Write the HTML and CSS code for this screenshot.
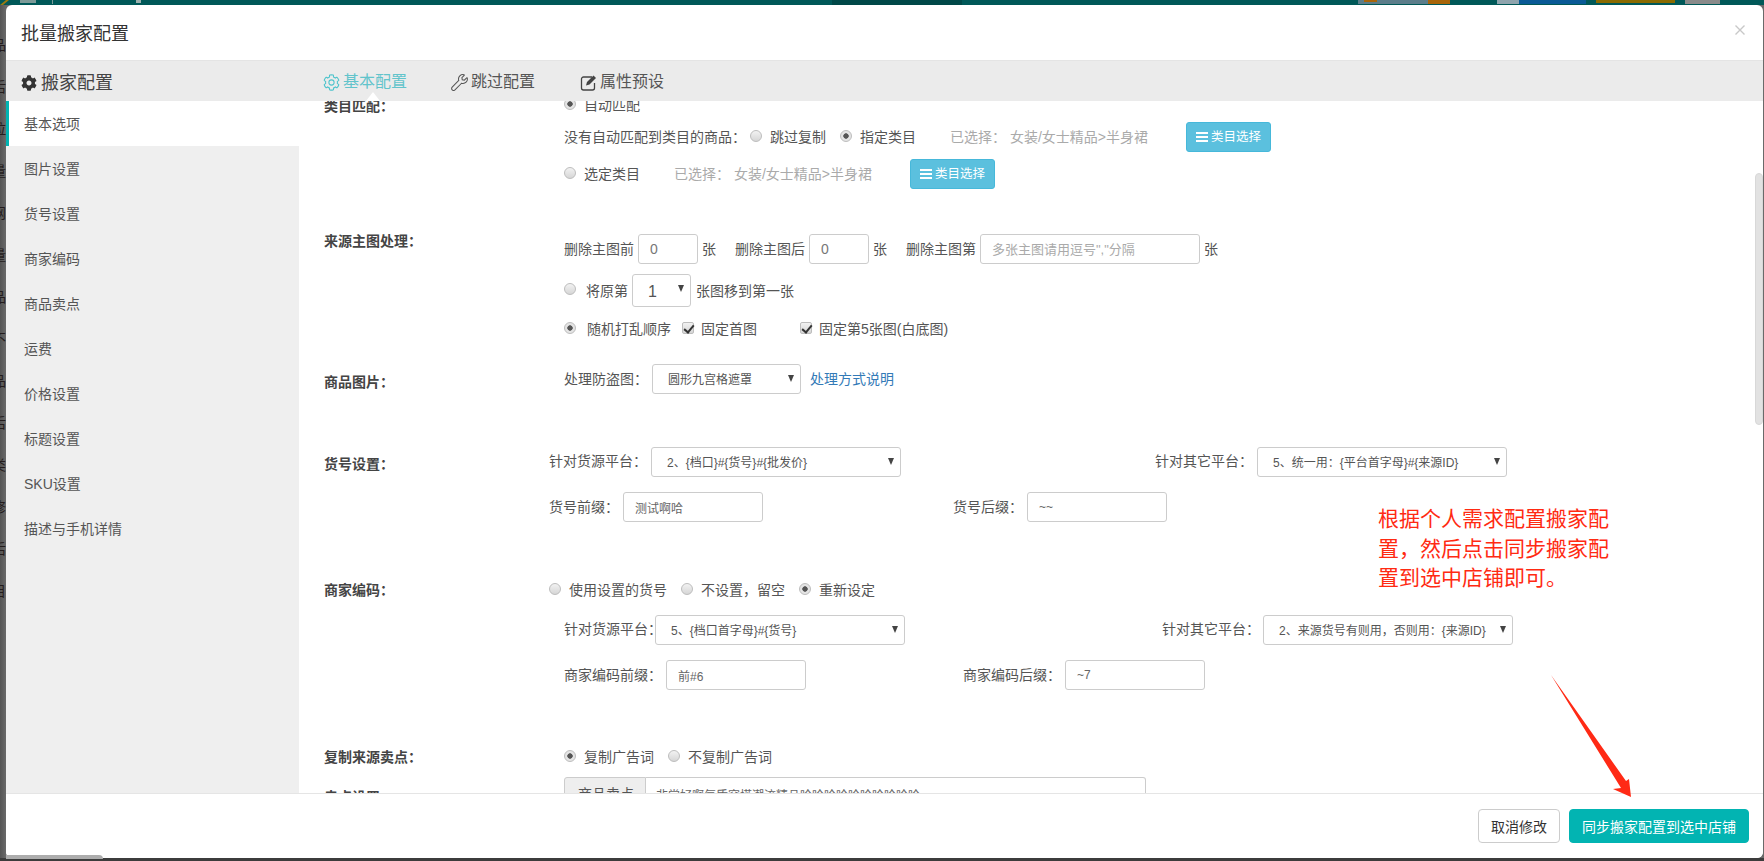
FILE: index.html
```html
<!DOCTYPE html>
<html lang="zh-CN">
<head>
<meta charset="utf-8">
<title>批量搬家配置</title>
<link rel="stylesheet" href="styles.css">
</head>
<body>
<div class="backdrop">
  <svg class="top-strip" width="1764" height="5" viewBox="0 0 1764 5" aria-hidden="true">
    <rect x="832" y="0" width="130" height="5" fill="#004848"/>
    <polygon points="0,5 6,0 9,0 3,5" fill="#9a7a10"/>
    <rect x="20" y="0" width="16" height="3" fill="#7d9a98"/>
    <rect x="52" y="0" width="1" height="4" fill="#7d9a98"/>
    <rect x="136" y="0" width="5" height="3" fill="#9db0ae"/>
    <rect x="1358" y="0" width="70" height="4" fill="#5c7d8a"/>
    <rect x="1364" y="0" width="13" height="2" fill="#a8650a"/>
    <rect x="1428" y="0" width="22" height="4" fill="#a8650a"/>
    <rect x="1497" y="0" width="22" height="4" fill="#8fa4ad"/>
    <rect x="1519" y="0" width="67" height="4" fill="#0a5a96"/>
    <rect x="1596" y="0" width="79" height="3" fill="#8a6a00"/>
    <rect x="1685" y="0" width="35" height="4" fill="#8a8a8a"/>
  </svg>
  <div class="left-strip" aria-hidden="true">
    <span>品</span><span>后</span><span>拉</span><span>量</span><span>网</span><span>量</span><span>品</span><span>不</span><span>品</span><span>后</span><span>类</span><span>修</span><span>后</span><span>目</span>
  </div>
</div>

<div class="modal">
  <header class="modal-head">
    <h1 class="modal-title">批量搬家配置</h1>
    <svg class="close" width="10" height="10" viewBox="0 0 10 10" aria-hidden="true"><path d="M0.5 0.5L9.5 9.5M9.5 0.5L0.5 9.5"/></svg>
  </header>

  <div class="band">
    <div class="band-left">
      <svg class="ic-solid" width="16" height="16" viewBox="0 0 512 512" aria-hidden="true"><path d="M487.4 315.7l-42.6-24.6c4.3-23.2 4.3-47 0-70.2l42.6-24.6c4.9-2.8 7.1-8.6 5.5-14-11.1-35.6-30-67.8-54.7-94.6-3.8-4.1-10-5.1-14.8-2.3L380.8 110c-17.9-15.4-38.5-27.3-60.8-35.1V25.8c0-5.6-3.9-10.5-9.4-11.7-36.7-8.2-74.3-7.8-109.2 0-5.5 1.2-9.4 6.1-9.4 11.7V75c-22.2 7.9-42.8 19.8-60.8 35.1L88.7 85.5c-4.9-2.8-11-1.9-14.8 2.3-24.7 26.7-43.6 58.9-54.7 94.6-1.7 5.4.6 11.2 5.5 14L67.3 221c-4.3 23.2-4.3 47 0 70.2l-42.6 24.6c-4.9 2.8-7.1 8.6-5.5 14 11.1 35.6 30 67.8 54.7 94.6 3.8 4.1 10 5.1 14.8 2.3l42.6-24.6c17.9 15.4 38.5 27.3 60.8 35.1v49.2c0 5.6 3.9 10.5 9.4 11.7 36.7 8.2 74.3 7.8 109.2 0 5.5-1.2 9.4-6.1 9.4-11.7v-49.2c22.2-7.9 42.8-19.8 60.8-35.1l42.6 24.6c4.9 2.8 11 1.9 14.8-2.3 24.7-26.7 43.6-58.9 54.7-94.6 1.5-5.5-.7-11.3-5.6-14.1zM256 336c-44.1 0-80-35.9-80-80s35.9-80 80-80 80 35.9 80 80-35.9 80-80 80z"/></svg>
      <span class="band-title">搬家配置</span>
    </div>
    <nav class="tabs">
      <a class="tab active">
        <svg class="ic-line" width="17" height="17" viewBox="-20 -20 552 552" aria-hidden="true"><path d="M487.4 315.7l-42.6-24.6c4.3-23.2 4.3-47 0-70.2l42.6-24.6c4.9-2.8 7.1-8.6 5.5-14-11.1-35.6-30-67.8-54.7-94.6-3.8-4.1-10-5.1-14.8-2.3L380.8 110c-17.9-15.4-38.5-27.3-60.8-35.1V25.8c0-5.6-3.9-10.5-9.4-11.7-36.7-8.2-74.3-7.8-109.2 0-5.5 1.2-9.4 6.1-9.4 11.7V75c-22.2 7.9-42.8 19.8-60.8 35.1L88.7 85.5c-4.9-2.8-11-1.9-14.8 2.3-24.7 26.7-43.6 58.9-54.7 94.6-1.7 5.4.6 11.2 5.5 14L67.3 221c-4.3 23.2-4.3 47 0 70.2l-42.6 24.6c-4.9 2.8-7.1 8.6-5.5 14 11.1 35.6 30 67.8 54.7 94.6 3.8 4.1 10 5.1 14.8 2.3l42.6-24.6c17.9 15.4 38.5 27.3 60.8 35.1v49.2c0 5.6 3.9 10.5 9.4 11.7 36.7 8.2 74.3 7.8 109.2 0 5.5-1.2 9.4-6.1 9.4-11.7v-49.2c22.2-7.9 42.8-19.8 60.8-35.1l42.6 24.6c4.9 2.8 11 1.9 14.8-2.3 24.7-26.7 43.6-58.9 54.7-94.6 1.5-5.5-.7-11.3-5.6-14.1z"/><circle cx="256" cy="256" r="85"/></svg>
        基本配置
      </a>
      <a class="tab">
        <svg class="ic-line" width="17" height="17" viewBox="-20 -20 552 552" aria-hidden="true"><path d="M507.73 109.1c-2.24-9.03-13.54-12.09-20.12-5.51l-74.36 74.36-67.88-11.31-11.31-67.88 74.36-74.36c6.62-6.62 3.43-17.9-5.66-20.16-47.38-11.74-99.55.91-136.58 37.93-39.64 39.64-50.55 97.1-34.05 147.2L18.74 402.76c-24.99 24.99-24.99 65.51 0 90.5 24.99 24.99 65.51 24.99 90.5 0l213.21-213.21c50.12 16.71 107.47 5.68 147.37-34.22 37.07-37.07 49.7-89.32 37.91-136.73z"/></svg>
        跳过配置
      </a>
      <a class="tab">
        <svg class="ic-edit" width="17" height="17" viewBox="0 0 17 17" aria-hidden="true"><path class="box" d="M12 3H3.500A2 2 0 0 0 1.500 5V14A2 2 0 0 0 3.500 16H12.500A2 2 0 0 0 14.500 14V9"/><path class="pen" d="M6 11.500L7 8L13.500 1.500L16 4L9.500 10.500Z"/></svg>
        属性预设
      </a>
    </nav>
  </div>

  <div class="modal-body">
    <aside class="side">
      <a class="side-item active">基本选项</a>
      <a class="side-item">图片设置</a>
      <a class="side-item">货号设置</a>
      <a class="side-item">商家编码</a>
      <a class="side-item">商品卖点</a>
      <a class="side-item">运费</a>
      <a class="side-item">价格设置</a>
      <a class="side-item">标题设置</a>
      <a class="side-item">SKU设置</a>
      <a class="side-item">描述与手机详情</a>
    </aside>

    <main class="content">
      <section class="sec s-a">
        <div class="lbl d1">类目匹配：</div>
        <div class="vals">
          <div class="line ind">
            <input class="radio" type="radio" name="r1" checked><span class="t8">自动匹配</span>
          </div>
          <div class="line ind mt2">
            <span class="cn">没有自动匹配到类目的商品：</span>
            <input class="radio m11" type="radio" name="r2"><span class="t8">跳过复制</span>
            <input class="radio m14" type="radio" name="r2" checked><span class="t8">指定类目</span>
            <span class="muted m34">已选择： 女装/女士精品&gt;半身裙</span>
            <button class="btn-info m38" type="button"><span class="bars"></span>类目选择</button>
          </div>
          <div class="line ind mt7">
            <input class="radio" type="radio" name="r1"><span class="t8">选定类目</span>
            <span class="muted m34">已选择： 女装/女士精品&gt;半身裙</span>
            <button class="btn-info m38" type="button"><span class="bars"></span>类目选择</button>
          </div>
        </div>
      </section>

      <section class="sec s-d">
        <div class="lbl up8">来源主图处理：</div>
        <div class="vals">
          <div class="line ind">
            <span>删除主图前</span><input class="field w60 m4 big" value="0"><span class="m4">张</span>
            <span class="m19">删除主图后</span><input class="field w60 m4 big" value="0"><span class="m4">张</span>
            <span class="m19">删除主图第</span><input class="field w220 m4" placeholder="多张主图请用逗号&quot;,&quot;分隔"><span class="m4">张</span>
          </div>
          <div class="line h33 ind mt10">
            <input class="radio" type="radio" name="r3"><span class="t10">将原第</span>
            <span class="sel w59 m4 h33"><select class="num"><option>1</option></select></span>
            <span class="m5">张图移到第一张</span>
          </div>
          <div class="line ind mt7">
            <input class="radio" type="radio" name="r3" checked><span class="t11">随机打乱顺序</span>
            <input class="check m11" type="checkbox" checked><span class="t7">固定首图</span>
            <input class="check m43" type="checkbox" checked><span class="t7">固定第5张图(白底图)</span>
          </div>
        </div>
      </section>

      <section class="sec s-g">
        <div class="lbl d3">商品图片：</div>
        <div class="vals">
          <div class="line ind">
            <span class="cn">处理防盗图：</span>
            <span class="sel w149 m11"><select><option>圆形九宫格遮罩</option></select></span>
            <a class="link m9">处理方式说明</a>
          </div>
        </div>
      </section>

      <section class="sec s-h">
        <div class="lbl d2">货号设置：</div>
        <div class="vals">
          <div class="line">
            <span class="cn up">针对货源平台：</span>
            <span class="sel w250 m11"><select><option>2、{档口}#{货号}#{批发价}</option></select></span>
            <span class="cn up m254">针对其它平台：</span>
            <span class="sel w250 m11"><select><option>5、统一用：{平台首字母}#{来源ID}</option></select></span>
          </div>
          <div class="line mt15">
            <span class="cn">货号前缀：</span>
            <input class="field w140 m11" value="测试啊哈">
            <span class="cn m190">货号后缀：</span>
            <input class="field w140 m11" value="~~">
          </div>
        </div>
      </section>

      <section class="sec s-j">
        <div class="lbl">商家编码：</div>
        <div class="vals">
          <div class="line">
            <input class="radio" type="radio" name="r4"><span class="t8">使用设置的货号</span>
            <input class="radio m14" type="radio" name="r4"><span class="t8">不设置，留空</span>
            <input class="radio m14" type="radio" name="r4" checked><span class="t8">重新设定</span>
          </div>
          <div class="line ind mt10">
            <span class="cn up">针对货源平台：</span>
            <span class="sel w250"><select><option>5、{档口首字母}#{货号}</option></select></span>
            <span class="cn up m257">针对其它平台：</span>
            <span class="sel w250 m10"><select><option>2、来源货号有则用，否则用：{来源ID}</option></select></span>
          </div>
          <div class="line ind mt15">
            <span class="cn">商家编码前缀：</span>
            <input class="field w140 m11" value="前#6">
            <span class="cn m157">商家编码后缀：</span>
            <input class="field w140 m11" value="~7">
          </div>
        </div>
      </section>

      <section class="sec s-m">
        <div class="lbl">复制来源卖点：</div>
        <div class="vals">
          <div class="line ind">
            <input class="radio" type="radio" name="r5" checked><span class="t8">复制广告词</span>
            <input class="radio m14" type="radio" name="r5"><span class="t8">不复制广告词</span>
          </div>
        </div>
      </section>

      <section class="sec s-n">
        <div class="lbl d5">卖点设置：</div>
        <div class="vals">
          <div class="line h34 ind">
            <span class="addon">商品卖点</span><input class="field group" value="非常好啊气质穿搭潮流精品哈哈哈哈哈哈哈哈哈哈">
          </div>
        </div>
      </section>
      <div class="scroll-thumb"></div>
    </main>
  </div>

  <footer class="modal-foot">
    <button class="btn-cancel" type="button">取消修改</button>
    <button class="btn-primary" type="button">同步搬家配置到选中店铺</button>
  </footer>
</div>

<div class="note">根据个人需求配置搬家配置，然后点击同步搬家配置到选中店铺即可。</div>
<svg class="pointer" width="1764" height="861" viewBox="0 0 1764 861" aria-hidden="true"><polygon points="1551,675 1621,788 1613,789 1631,797 1629,779 1626,781"/></svg>
<div class="corner-bit"></div>
</body>
</html>
```

FILE: styles.css
```css
* { box-sizing: border-box; }
html, body { margin: 0; height: 100%; }
body {
  width: 1764px;
  height: 861px;
  overflow: hidden;
  background: #3c3c3c;
  font-family: "Liberation Sans", "Noto Sans CJK SC", sans-serif;
  font-size: 14px;
  color: #555;
  position: relative;
}

/* page behind the dialog */
.backdrop { height: 858px; background: linear-gradient(90deg, #545454, #6a6a6a 6px); }
.top-strip { display: block; background: #005858; }
.left-strip {
  width: 6px;
  height: 850px;
  padding-top: 19px;
  overflow: hidden;
  display: flex;
  flex-direction: column;
  color: #241c1c;
}
.left-strip span { display: block; height: 42px; line-height: 42px; margin-left: -8px; white-space: nowrap; }

/* dialog */
.modal {
  position: absolute;
  left: 6px;
  top: 5px;
  width: 1757px;
  height: 853px;
  background: #fff;
  border-radius: 6px;
  overflow: hidden;
  display: flex;
  flex-direction: column;
}
.modal-head {
  height: 55px;
  flex: none;
  display: flex;
  align-items: center;
  justify-content: space-between;
  padding: 2px 18px 0 15px;
}
.modal-title { margin: 0; font-size: 18px; font-weight: 400; color: #333; line-height: 24px; }
.close { fill: none; stroke: #c8c8c8; stroke-width: 1.4; margin-top: -8px; }

.band {
  height: 41px;
  flex: none;
  display: flex;
  align-items: center;
  background: #ebebeb;
  border-top: 1px solid #e4e4e4;
}
.band-left { width: 293px; flex: none; display: flex; align-items: center; padding: 4px 0 0 15px; }
.ic-solid { fill: #333; flex: none; }
.band-title { margin-left: 4px; font-size: 18px; line-height: 24px; color: #444; }
.tabs { display: flex; padding: 2px 0 0 24px; }
.tab {
  position: relative;
  display: flex;
  align-items: center;
  gap: 3px;
  margin-right: 44px;
  font-size: 16px;
  line-height: 24px;
  color: #555;
}
.tab + .tab + .tab { margin-left: 1px; }
.tab.active { color: #62c4cb; }
.tab.active::after {
  content: "";
  position: absolute;
  left: 43px;
  top: 22px;
  border: 7px solid transparent;
  border-top: 0;
  border-bottom: 9px solid #fff;
}
.ic-line { fill: none; stroke: #555; stroke-width: 34; flex: none; }
.tab.active .ic-line { stroke: #4fc4cc; }
.ic-edit { flex: none; }
.ic-edit .box { fill: none; stroke: #444; stroke-width: 1.3; }
.ic-edit .pen { fill: #444; }

.modal-body { flex: 1; min-height: 0; display: flex; }
.side { width: 293px; flex: none; background: #efefef; }
.side-item {
  display: block;
  height: 45px;
  line-height: 45px;
  padding: 1px 0 0 18px;
  color: #555;
}
.side-item.active { background: #fff; border-left: 3px solid #02b4b2; padding-left: 15px; }

.content { flex: 1; min-width: 0; position: relative; overflow: hidden; padding-left: 25px; background: #fff; }
.scroll-thumb {
  position: absolute;
  right: 0;
  top: 72px;
  width: 8px;
  height: 252px;
  border-radius: 4px;
  background: #e2e2e2;
  border: 1px solid #d8d8d8;
}

.sec { display: grid; grid-template-columns: 225px 1fr; }
.s-a { margin-top: -11px; }
.s-d { margin-top: 45px; }
.s-g { margin-top: 20px; }
.s-h { margin-top: 50px; }
.s-j { margin-top: 53px; }
.s-m { margin-top: 52px; }
.s-n { margin-top: 5px; }

.lbl { height: 30px; line-height: 30px; font-weight: 700; color: #444; white-space: nowrap; font-feature-settings: "halt"; }
.d1 { margin-top: 1px; }
.d2 { margin-top: 2px; }
.d3 { margin-top: 3px; }
.d5 { margin-top: 5px; }
.up8 { margin-top: -8px; }

.vals { min-width: 0; }
.line { height: 30px; display: flex; align-items: center; white-space: nowrap; line-height: 20px; }
.line.h33 { height: 33px; }
.line.h34 { height: 34px; }
.ind { padding-left: 15px; }
.cn { font-feature-settings: "halt"; }
.cn.up { padding-bottom: 2px; }
.muted { color: #aaa; }
.link { color: #337ab7; }

.mt2 { margin-top: 2px; }
.mt7 { margin-top: 7px; }
.mt10 { margin-top: 10px; }
.mt15 { margin-top: 15px; }

.m4 { margin-left: 4px; }
.m5 { margin-left: 5px; }
.m9 { margin-left: 9px; }
.m10 { margin-left: 10px; }
.m11 { margin-left: 11px; }
.m14 { margin-left: 14px; }
.m19 { margin-left: 19px; }
.m34 { margin-left: 34px; }
.m38 { margin-left: 38px; }
.m43 { margin-left: 43px; }
.m157 { margin-left: 157px; }
.m190 { margin-left: 190px; }
.m254 { margin-left: 254px; }
.m257 { margin-left: 257px; }
.t7 { margin-left: 7px; }
.t8 { margin-left: 8px; }
.t10 { margin-left: 10px; }
.t11 { margin-left: 11px; }

.radio, .check {
  appearance: none;
  flex: none;
  width: 12px;
  height: 12px;
  padding: 0;
  margin-top: -3px;
  margin-bottom: 0;
  margin-right: 0;
  border: 1px solid #bdbdbd;
  background: linear-gradient(#f2f2f2, #d6d6d6);
  position: relative;
}
.radio { border-radius: 50%; }
.radio:not(.m11):not(.m14) { margin-left: 0; }
.radio:checked { background: radial-gradient(circle, #555 0 2.4px, #e4e4e4 3px); }
.check { border-radius: 2px; }
.check:not(.m11):not(.m43) { margin-left: 0; }
.check:checked::after {
  content: "";
  position: absolute;
  left: 3px;
  top: 0;
  width: 4px;
  height: 8px;
  border: solid #333;
  border-width: 0 2px 2px 0;
  transform: rotate(40deg);
}

.field {
  height: 30px;
  padding: 0 11px;
  border: 1px solid #ccc;
  border-radius: 3px;
  font: inherit;
  font-size: 12px;
  color: #666;
  background: #fff;
  outline: none;
}
.field.big { font-size: 14px; color: #777; }
.field::placeholder { color: #aaa; opacity: 1; }
.w60 { width: 60px; }
.w140 { width: 140px; }
.w220 { width: 220px; }
.field.w220 { font-size: 13px; }
.field.group {
  width: 500px;
  height: 34px;
  border-radius: 0 3px 3px 0;
  border-left: 0;
  padding: 0 10px;
  font-size: 12px;
}
.addon {
  width: 82px;
  height: 34px;
  line-height: 32px;
  padding-left: 13px;
  background: #eee;
  border: 1px solid #ccc;
  border-radius: 3px 0 0 3px;
  color: #555;
}

.sel { position: relative; display: block; height: 30px; flex: none; }
.sel.h33 { height: 33px; }
.sel::after {
  content: "";
  position: absolute;
  right: 7px;
  top: 11px;
  border: 3px solid transparent;
  border-top: 7px solid #444;
  border-bottom: 0;
}
.sel select {
  appearance: none;
  display: block;
  width: 100%;
  height: 100%;
  padding: 2px 18px 0 15px;
  border: 1px solid #ccc;
  border-radius: 3px;
  background: #fff;
  font: inherit;
  font-size: 12px;
  color: #555;
  outline: none;
}
.sel select.num { font-size: 16px; padding: 3px 18px 0 15px; }
.w59 { width: 59px; }
.w149 { width: 149px; }
.w250 { width: 250px; }

.btn-info {
  width: 85px;
  height: 30px;
  padding: 0;
  display: flex;
  align-items: center;
  justify-content: center;
  gap: 3px;
  background: #5bc0de;
  border: 1px solid #46b8da;
  border-radius: 3px;
  color: #fff;
  font: inherit;
  font-size: 12.5px;
}
.bars {
  display: block;
  width: 12px;
  height: 10px;
  background: linear-gradient(#fff 0 2px, transparent 2px 4px, #fff 4px 6px, transparent 6px 8px, #fff 8px 10px);
}

.modal-foot {
  height: 65px;
  flex: none;
  display: flex;
  align-items: center;
  justify-content: flex-end;
  gap: 9px;
  padding: 0 14px 0 0;
  background: #fff;
  border-top: 1px solid #e5e5e5;
}
.btn-cancel, .btn-primary {
  height: 34px;
  border-radius: 4px;
  font: inherit;
  padding: 0;
}
.btn-cancel { width: 82px; background: #fff; border: 1px solid #ccc; color: #333; }
.btn-primary { width: 180px; background: #02b4b2; border: 1px solid #02b4b2; color: #fff; }

/* screenshot annotations drawn over the dialog */
.note {
  position: absolute;
  left: 1378px;
  top: 503px;
  width: 232px;
  font-size: 21px;
  line-height: 29.5px;
  color: #ff2a12;
  font-family: "Noto Sans CJK SC", sans-serif;
}
.pointer { position: absolute; left: 0; top: 0; fill: #ff2a15; pointer-events: none; }
.corner-bit {
  position: absolute;
  left: 6px;
  top: 855px;
  width: 97px;
  height: 4px;
  background: #adadad;
  border-radius: 0 4px 0 0;
}
```
